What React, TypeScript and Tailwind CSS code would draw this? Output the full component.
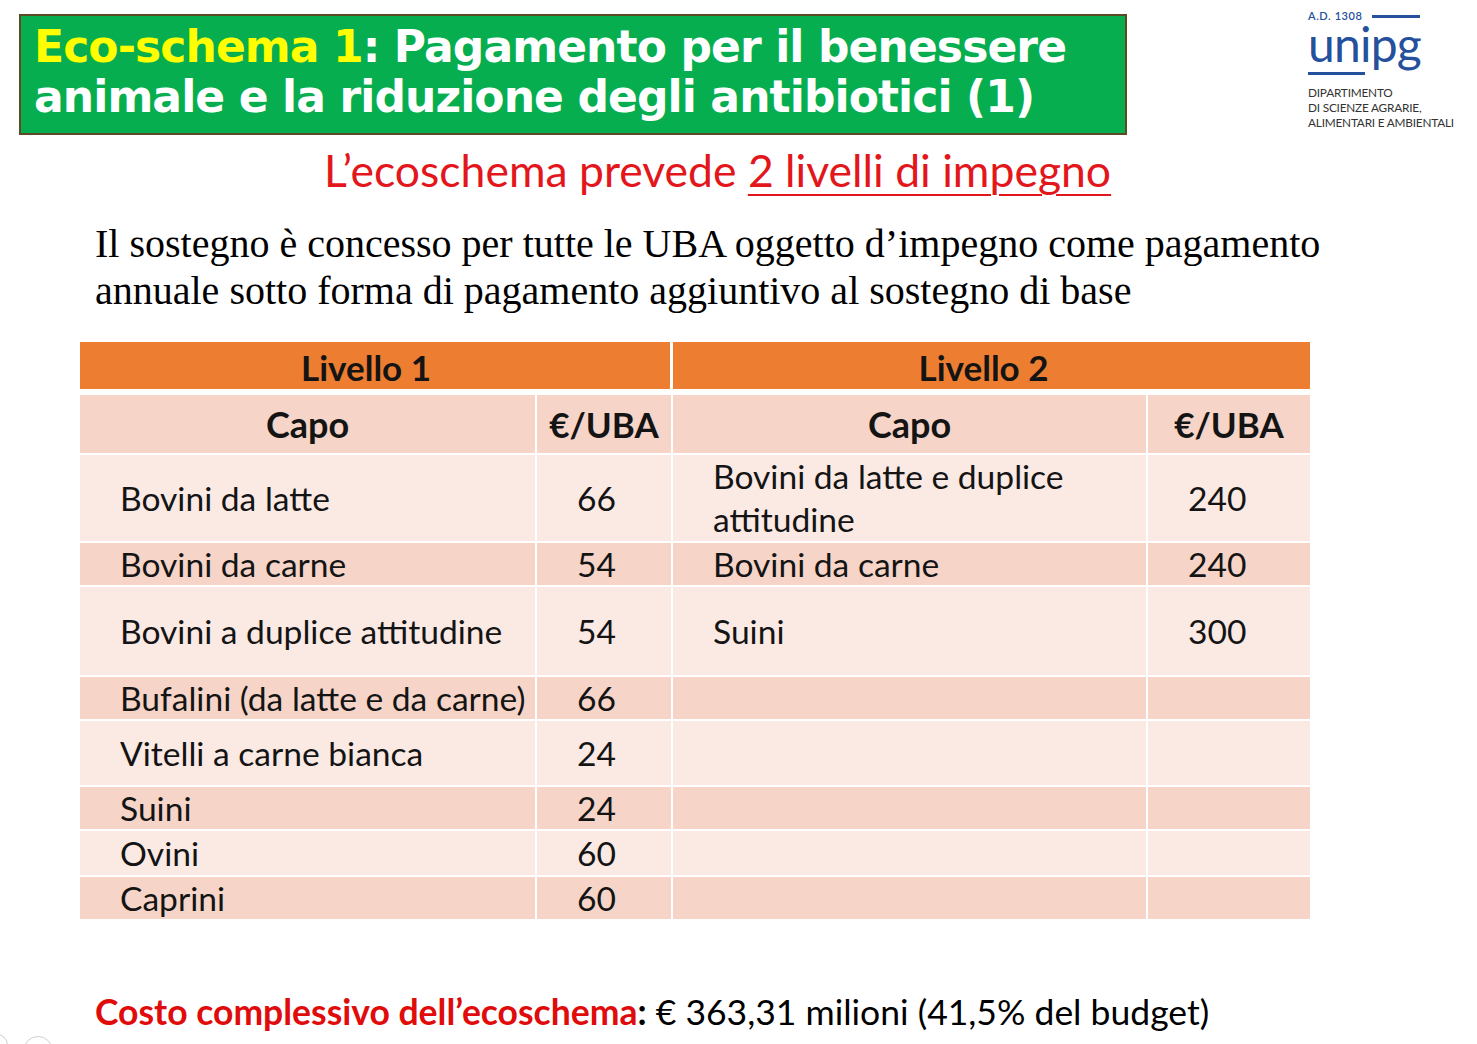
const rows = [
  { l1: "Bovini da latte", v1: "66", l2: ["Bovini da latte e duplice", "attitudine"], v2: "240", h: "h-[86px]", dark: false },
  { l1: "Bovini da carne", v1: "54", l2: ["Bovini da carne"], v2: "240", h: "h-[42px]", dark: true },
  { l1: "Bovini a duplice attitudine", v1: "54", l2: ["Suini"], v2: "300", h: "h-[88px]", dark: false },
  { l1: "Bufalini (da latte e da carne)", v1: "66", l2: [], v2: "", h: "h-[42px]", dark: true },
  { l1: "Vitelli a carne bianca", v1: "24", l2: [], v2: "", h: "h-[64px]", dark: false },
  { l1: "Suini", v1: "24", l2: [], v2: "", h: "h-[42px]", dark: true },
  { l1: "Ovini", v1: "60", l2: [], v2: "", h: "h-[44px]", dark: false },
  { l1: "Caprini", v1: "60", l2: [], v2: "", h: "h-[42px]", dark: true },
]

function Logo() {
  return (
    <div className="w-[150px] pt-[10px] font-['Lato',sans-serif] text-[#24509c]">
      <div className="flex items-center h-[12px]">
        <span className="text-[11px] font-semibold tracking-[0.6px] leading-[12px]">A.D. 1308</span>
        <div className="ml-[9px] h-[3px] w-[48px] bg-[#24509c]" />
      </div>
      <div className="mt-[5px] text-[48px] font-normal leading-[34px] tracking-[-0.8px]">unipg</div>
      <div className="mt-[11px] h-[3px] w-[57px] bg-[#24509c]" />
      <div className="mt-[10px] w-[170px] text-[11.8px] leading-[15px] text-[#333] tracking-[-0.2px]">
        <div>DIPARTIMENTO</div>
        <div>DI SCIENZE AGRARIE,</div>
        <div>ALIMENTARI E AMBIENTALI</div>
      </div>
    </div>
  )
}

export default function App() {
  return (
    <div className="relative w-[1477px] h-[1044px] bg-white overflow-hidden text-[#111]">
      {/* Header */}
      <div className="flex items-start">
        <div className="ml-[19px] mt-[14px] w-[1108px] h-[121px] border-2 border-[#5b4a23] bg-[#06ae50] pl-[13px] pt-[6px]">
          <div className="font-['DejaVu_Sans',sans-serif] font-bold text-[44px] leading-[50px] tracking-[-0.9px] text-white">
            <span className="text-[#ffff00]">Eco-schema 1</span>: Pagamento per il benessere
            <br />
            animale e la riduzione degli antibiotici (1)
          </div>
        </div>
        <div className="ml-auto mr-[19px]">
          <Logo />
        </div>
      </div>

      {/* Subtitle */}
      <div className="mt-[10px] pl-[324px] font-['Lato',sans-serif] text-[44.5px] leading-[50px] text-[#e2161b]">
        L’ecoschema prevede <span className="underline decoration-[2px] underline-offset-[7px]">2 livelli di impegno</span>
      </div>

      {/* Paragraph */}
      <div className="mt-[25px] pl-[95px] font-['Liberation_Serif',serif] text-[40px] leading-[47px] text-black">
        Il sostegno è concesso per tutte le UBA oggetto d’impegno come pagamento
        <br />
        annuale sotto forma di pagamento aggiuntivo al sostegno di base
      </div>

      {/* Table */}
      <div className="ml-[80px] mt-[28px] w-[1230px] font-['Lato',sans-serif] text-[#141414]">
        <div className="grid grid-cols-[590px_637px] grid-rows-[47px] gap-x-[3px]">
          <div className="bg-[#ed7d31] flex items-center justify-center pr-[18px] pt-[4px] text-[35px] leading-none font-bold">Livello 1</div>
          <div className="bg-[#ed7d31] flex items-center justify-center pr-[16px] pt-[4px] text-[35px] leading-none font-bold">Livello 2</div>
        </div>
        <div className="mt-[6px] grid grid-cols-[455px_134px_473px_162px] gap-x-[2px] gap-y-[2px]">
          <div className="h-[58px] bg-[#f6d4c8] flex items-center justify-center text-[36px] font-bold">Capo</div>
          <div className="h-[58px] bg-[#f6d4c8] flex items-center justify-center text-[35px] font-bold">€/UBA</div>
          <div className="h-[58px] bg-[#f6d4c8] flex items-center justify-center text-[36px] font-bold">Capo</div>
          <div className="h-[58px] bg-[#f6d4c8] flex items-center justify-center text-[35px] font-bold">€/UBA</div>
          {rows.map((r) => {
            const bg = r.dark ? "bg-[#f6d4c8]" : "bg-[#fbe9e4]"
            return (
              <>
                <div key={r.l1 + "a"} className={`${r.h} ${bg} flex items-center pl-[40px] text-[33.6px] leading-[43px]`}>{r.l1}</div>
                <div key={r.l1 + "b"} className={`${r.h} ${bg} flex items-center pl-[40px] text-[33.6px] leading-[43px]`}>{r.v1}</div>
                <div key={r.l1 + "c"} className={`${r.h} ${bg} flex flex-col justify-center pl-[40px] text-[33.6px] leading-[43px]`}>
                  {r.l2.map((t) => (
                    <div key={t}>{t}</div>
                  ))}
                </div>
                <div key={r.l1 + "d"} className={`${r.h} ${bg} flex items-center pl-[40px] text-[33.6px] leading-[43px]`}>{r.v2}</div>
              </>
            )
          })}
        </div>
      </div>

      {/* Footer */}
      <div className="mt-[73px] pl-[95px] font-['Lato',sans-serif] text-[35.5px] leading-[40px] text-black">
        <span className="font-bold text-[#e00b0b]">Costo complessivo dell’ecoschema</span>
        <span className="font-bold">:</span> € 363,31 milioni (41,5% del budget)
      </div>

      {/* faint viewer controls */}
      <div className="absolute left-[-14px] top-[1034px] w-[22px] h-[22px] rounded-full border border-[#d0d0d0]" />
      <div className="absolute left-[23px] top-[1036px] w-[30px] h-[30px] rounded-full border border-[#d0d0d0]" />
    </div>
  )
}
